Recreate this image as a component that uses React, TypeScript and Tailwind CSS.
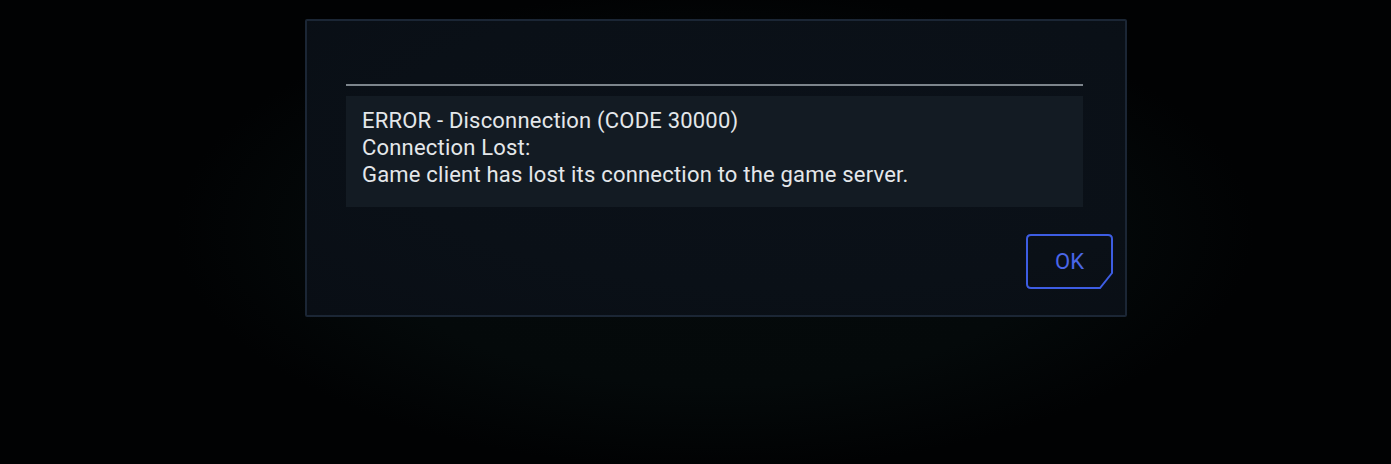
import type { FC } from "react";

const OkButton: FC = () => {
  return (
    <button className="relative w-[87px] h-[55px] flex items-center justify-center text-[22px] text-[#4a66e8] font-['Roboto',sans-serif] leading-none">
      {/* outline with the cut corner */}
      <svg
        className="absolute inset-0"
        width="87"
        height="55"
        viewBox="0 0 87 55"
        fill="none"
      >
        <path
          d="M5 1 H82 Q86 1 86 5 V39 L74 54 H5 Q1 54 1 50 V5 Q1 1 5 1 Z"
          stroke="#3d5de3"
          strokeWidth="2"
        />
      </svg>
      <span className="relative pt-[1px]">OK</span>
    </button>
  );
};

const App: FC = () => {
  return (
    <div className="w-full h-[464px] flex justify-center pl-[41px] pt-[19px] bg-[radial-gradient(ellipse_540px_240px_at_715px_230px,#050a0b_0%,#04090a_65%,#010203_100%)] font-['Roboto',sans-serif]">
      <div className="w-[822px] h-[298px] border-2 border-[#1b2635] rounded-[2px] bg-[radial-gradient(ellipse_at_60%_40%,#0b1119_0%,#0a1017_60%,#090e15_100%)] flex flex-col pl-[39px] pr-[42px] pt-[63px]">
        <div className="h-[2px] bg-[#7d858c]" />
        <div className="mt-[10px] h-[111px] bg-[#131b23] pl-[16px] pt-[11px] text-[22px] tracking-[0.2px] leading-[27px] text-[#e4e7ea]">
          <p>ERROR - Disconnection (CODE 30000)</p>
          <p>Connection Lost:</p>
          <p>Game client has lost its connection to the game server.</p>
        </div>
        <div className="flex justify-end -mr-[30px] mt-[27px]">
          <OkButton />
        </div>
      </div>
    </div>
  );
};

export default App;
